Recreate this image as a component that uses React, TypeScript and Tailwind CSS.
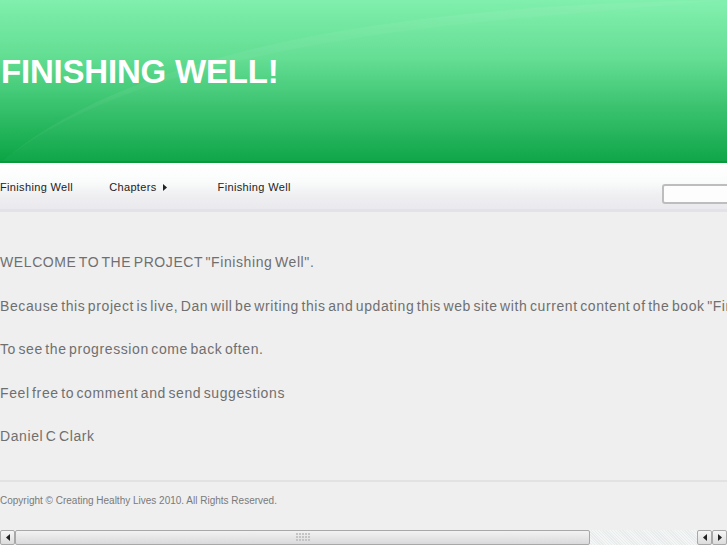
import React from "react";

export default function App() {
  const paras = [
    'WELCOME TO THE PROJECT "Finishing Well".',
    'Because this project is live, Dan will be writing this and updating this web site with current content of the book "Finishing Well" as it progresses.',
    "To see the progression come back often.",
    "Feel free to comment and send suggestions",
    "Daniel C Clark",
  ];
  return (
    <div className="w-[727px] h-[545px] overflow-hidden bg-[#efefef] flex flex-col font-['Liberation_Sans',Arial,sans-serif]">
      {/* Header */}
      <div className="relative h-[163px] shrink-0 overflow-hidden bg-[linear-gradient(to_bottom,#7cefab_0%,#5cdd8e_35%,#2cbd64_68%,#00a03c_100%)]">
        <svg className="absolute inset-0" width="727" height="163" viewBox="0 0 727 163">
          <path d="M0 163 C 120 60, 360 5, 727 0 L 727 163 Z" fill="#ffffff" opacity="0.06" />
          <path d="M0 163 C 90 90, 250 45, 500 20 L 727 0 L 0 0 Z" fill="#ffffff" opacity="0.04" />
        </svg>
        <h1 className="absolute left-[1px] top-[51px] text-[33px] leading-[42px] font-bold tracking-[-0.2px] text-white">
          FINISHING WELL!
        </h1>
        <div className="absolute left-0 right-0 bottom-0 h-[2px] bg-[#0a9a3a]" />
      </div>
      {/* Nav */}
      <div className="h-[49px] shrink-0 flex items-start bg-[linear-gradient(to_bottom,#ffffff_0%,#fafcfb_40%,#efeff2_70%,#eaeaee_100%)] border-b-[3px] border-[#e2e2e8]">
        <div className="flex items-center h-[46px] pt-[3px] text-[11px] tracking-[0.35px] text-[#222] w-full">
          <span>Finishing Well</span>
          <span className="ml-[36px] flex items-center">
            Chapters
            <svg className="ml-[6px]" width="4" height="7" viewBox="0 0 4 7">
              <path d="M0 0 L4 3.5 L0 7 Z" fill="#222" />
            </svg>
          </span>
          <span className="ml-[51px]">Finishing Well</span>
          <div className="ml-auto mt-[12px] w-[70px] h-[20px] mr-[-5px] rounded-[3px] border-2 border-[#bdbdbd] bg-[#fdfdfd]" />
        </div>
      </div>
      {/* Content */}
      <div className="flex-1 pt-[40px] text-[14px] tracking-[0.6px] [word-spacing:-2px] text-[#6f6f6f] whitespace-nowrap">
        {paras.map((p, i) => (
          <p key={i} className="h-[43.6px] leading-[20px]">
            {p}
          </p>
        ))}
        <div className="mt-[10px] h-[2px] bg-[#e2e2e2] w-full" />
        <p className="mt-[12px] text-[10px] tracking-normal [word-spacing:0px] text-[#7a7a7a] leading-[14px]">
          Copyright © Creating Healthy Lives 2010. All Rights Reserved.
        </p>
      </div>
      {/* Scrollbar */}
      <div className="h-[15px] shrink-0 flex bg-[#efefef]">
        <div className="w-[15px] h-[15px] border border-[#a8a8a8] rounded-[2px] bg-[linear-gradient(#f6f6f6,#dcdcdc)] flex items-center justify-center">
          <svg width="4" height="7" viewBox="0 0 4 7"><path d="M4 0 L0 3.5 L4 7 Z" fill="#222" /></svg>
        </div>
        <div className="w-[575px] h-[15px] border border-[#a8a8a8] rounded-[2px] bg-[linear-gradient(#f2f2f2,#dadadc)] flex items-center justify-center">
          <svg width="14" height="9" viewBox="0 0 14 9">
            {[0, 1, 2].map((r) =>
              [0, 1, 2, 3, 4].map((c) => (
                <rect key={r + "-" + c} x={c * 3} y={r * 3} width="2" height="2" fill="#c4c4c4" />
              ))
            )}
          </svg>
        </div>
        <div className="flex-1 h-[15px] bg-[repeating-linear-gradient(45deg,#f4f6f6_0px,#f4f6f6_1px,#e9ecec_1px,#e9ecec_2px)]" />
        <div className="w-[15px] h-[15px] border border-[#a8a8a8] rounded-[2px] bg-[linear-gradient(#f6f6f6,#dcdcdc)] flex items-center justify-center">
          <svg width="4" height="7" viewBox="0 0 4 7"><path d="M4 0 L0 3.5 L4 7 Z" fill="#222" /></svg>
        </div>
        <div className="w-[15px] h-[15px] border border-[#a8a8a8] rounded-[2px] bg-[linear-gradient(#f6f6f6,#dcdcdc)] flex items-center justify-center">
          <svg width="4" height="7" viewBox="0 0 4 7"><path d="M0 0 L4 3.5 L0 7 Z" fill="#222" /></svg>
        </div>
      </div>
    </div>
  );
}
